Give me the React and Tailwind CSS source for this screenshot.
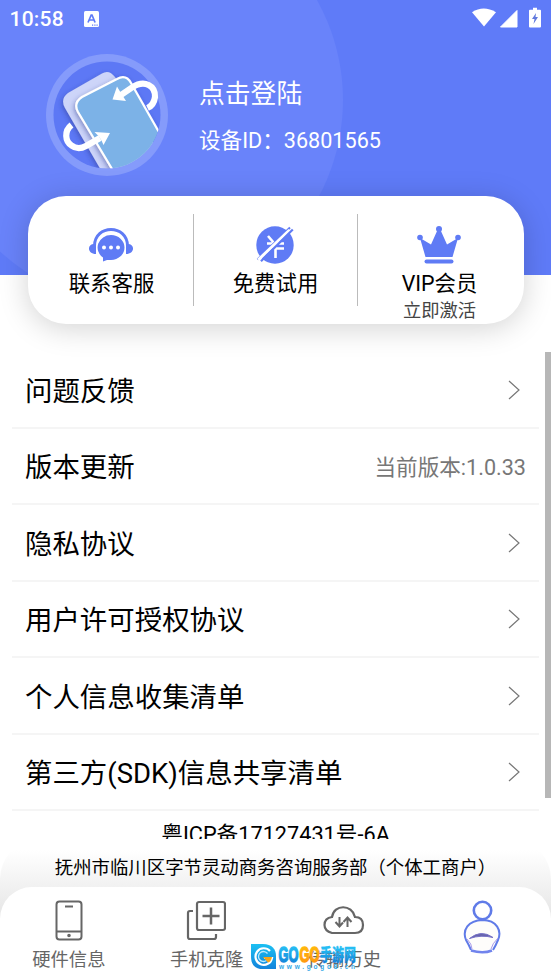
const menuItems = [
  { label: '问题反馈' },
  { label: '版本更新', note: '当前版本:1.0.33' },
  { label: '隐私协议' },
  { label: '用户许可授权协议' },
  { label: '个人信息收集清单' },
  { label: '第三方(SDK)信息共享清单' },
];

function StatusBar() {
  return (
    <div className="relative flex h-[38px] items-center text-white">
      <span className="ml-[9.5px] w-[54px] whitespace-nowrap text-[21px] font-medium leading-none tracking-[0.2px]">10:58</span>
      <svg className="ml-[20.5px] -mt-px" width="15" height="16" viewBox="0 0 15 16">
        <rect width="15" height="16" rx="1.5" fill="#fff" />
        <path d="M4 11.5 7.2 4h.8l3.1 7.5M5.2 9h4.6" fill="none" stroke="#5f7bf8" strokeWidth="1.7" />
        <path d="M8 14.2h1.2M10.3 14.2h1.2M12.5 14.2h1.2" stroke="#5f7bf8" strokeWidth="1.2" />
      </svg>
      <svg className="-mt-[3px] ml-auto mr-[8px]" width="72" height="22" viewBox="0 0 72 22">
        <path d="M1 5.3Q12.5-2.2 25 5.3L13 19.5Z" fill="#fff" />
        <path d="M46 3.5V20H29.5Z" fill="#fff" stroke="#fff" strokeLinejoin="round" />
        <path d="M62 .8h4v2h3q1 0 1 1V19.500q0 1-1 1H59q-1 0-1-1V3.800q0-1 1-1h3Z" fill="#fff" />
        <path d="M65 6 61 12h2.5l-1 5 4.5-7h-2.5Z" fill="#6179dd" />
      </svg>
    </div>
  );
}

function Avatar() {
  return (
    <svg width="122" height="122" viewBox="0 0 122 122">
      <defs>
        <clipPath id="disc">
          <circle cx="61" cy="61" r="53.5" />
        </clipPath>
        <filter id="soft" x="-30%" y="-30%" width="160%" height="160%">
          <feDropShadow dx="-1" dy="2" stdDeviation="2.5" floodColor="#26368f" floodOpacity=".5" />
        </filter>
      </defs>
      <circle cx="61" cy="61" r="61" fill="#859bfb" />
      <circle cx="61" cy="61" r="53.5" fill="#5d78f5" />
      <g clipPath="url(#disc)">
        <path d="M22 39 56 19.500Q63 15 69 23L120 110 70 142 19 54Q14 45 22 39Z" fill="#cdd5f9" filter="url(#soft)" />
        <path d="M36 43 71 25Q80 20 85 29L130 108 84 145 32 58Q27 49 36 43Z" fill="#7cb2e7" stroke="#fff" strokeWidth="2.200" filter="url(#soft)" />
      </g>
      <g fill="none" stroke="#fff" strokeWidth="6.200">
        <path d="M75 41 86 33.500C99 25 109.500 32 109 43Q108 51 101.500 54" />
        <path d="M25.500 71C18 77 19 87 25.500 91.500Q32 96.500 40 92L54 84" />
      </g>
      <path d="M66.500 45.500 71 32.500 74 37.500 77.500 43 80 47ZM64 79 48.500 78 52.500 82 55.500 86.500 57.500 91Z" fill="#fff" />
    </svg>
  );
}

function HeadsetIcon() {
  return (
    <svg className="mr-[2px]" width="44" height="34" viewBox="0 0 44 34">
      <path d="M5.500 18C5.500-4 38.500-4 38.500 18" fill="none" stroke="#5f7bf5" strokeWidth="3" />
      <path d="M7 16v10C-2 26-2 16 5 16ZM37 16v10C46 26 46 16 39 16Z" fill="#5f7bf5" />
      <path d="M22 7a13.500 12.500 0 1 1 0 25h-4l-4 1.500v-4A13.500 12.500 0 0 1 22 7Z" fill="#5f7bf5" />
      <g fill="#fff">
        <circle cx="15" cy="19.500" r="2" />
        <circle cx="22" cy="19.500" r="2" />
        <circle cx="29" cy="19.500" r="2" />
      </g>
    </svg>
  );
}

function FreeTrialIcon() {
  return (
    <svg className="mr-px" width="40" height="40" viewBox="0 0 40 40">
      <circle cx="20" cy="20" r="18.700" fill="#5f7bf5" />
      <path d="m13 11 6 7M12 18.500h17M18 23.500h11M20.500 18v15" stroke="#fff" strokeWidth="2.600" />
      <path d="M2.500 34.500 35 2.500" stroke="#5f7bf5" strokeWidth="2" />
      <path d="M3.300 34.800 34.500 5" stroke="#fff" strokeWidth="3" />
      <path d="M6 36.200 37.800 4.500" stroke="#5f7bf5" strokeWidth="2.200" />
    </svg>
  );
}

function CrownIcon() {
  return (
    <svg className="mr-[2px]" width="44" height="38" viewBox="0 0 44 38" fill="#5f7bf5">
      <circle cx="22" cy="3" r="3" />
      <circle cx="3" cy="11.500" r="2.800" />
      <circle cx="41" cy="11.500" r="2.800" />
      <path d="m3 12 11 6.500L20.500 4h3L30 18.500 41 12l-5.500 19h-27Z" />
      <rect x="7.500" y="33.500" width="29" height="4" rx="2" />
    </svg>
  );
}

function Action({ icon, label, sub }) {
  return (
    <div className="flex flex-1 flex-col items-center pt-[29px]">
      <div className="flex h-[40px] items-center">{icon}</div>
      <span className="mt-[5px] text-[21.4px] leading-[28px] text-black">{label}</span>
      {sub && <span className="text-[18.3px] leading-[25px] text-[#444]">{sub}</span>}
    </div>
  );
}

function MenuRow({ label, note }) {
  return (
    <div className="flex h-[76.5px] items-center border-b-2 border-[#f5f5f5] px-[13px] pt-[3px]">
      <span className="mt-[3px] text-[27.45px] leading-none text-black">{label}</span>
      {note ? (
        <span className="ml-auto mt-px text-[21.6px] leading-none text-[#777]">{note}</span>
      ) : (
        <svg className="-mt-[2px] ml-auto mr-[6px]" width="12" height="20" viewBox="0 0 12 20">
          <path d="m1 1 10 9-10 9" fill="none" stroke="#777" strokeWidth="1.2" />
        </svg>
      )}
    </div>
  );
}

function PhoneIcon() {
  return (
    <svg width="28" height="42" viewBox="0 0 28 42" fill="none" stroke="#666" strokeWidth="2">
      <rect x="1.500" y="1.500" width="25" height="38" rx="3" />
      <path d="M10 6.500h8M2 31.500h24" />
      <circle cx="14" cy="35.500" r=".8" fill="#666" />
    </svg>
  );
}

function CloneIcon() {
  return (
    <svg className="mr-px" width="40" height="42" viewBox="0 0 40 42" fill="none" stroke="#666" strokeWidth="2.2">
      <rect x="11" y="2" width="28" height="28" rx="2" />
      <path d="M16.500 16h17M25 7.500v17" strokeWidth="2.500" />
      <path d="M7 11H4q-2 0-2 2v24q0 2 2 2h24q2 0 2-2v-3" />
    </svg>
  );
}

function CloudIcon() {
  return (
    <svg width="42" height="42" viewBox="0 0 42 42" fill="none" stroke="#666" strokeWidth="2.200">
      <path d="M9 33Q1.500 31 1.500 25Q1.500 18 9 17C11 4 29 4 32 17Q40 17 40 25Q40 33 32 33Z" />
      <path d="M16.500 17v9.500M12.500 22l4 4.500 3.500-4M24.500 27v-9.500M20.500 22l4-4.500 4 4.500" strokeWidth="2" />
    </svg>
  );
}

function ProfileIcon() {
  return (
    <svg width="38" height="55" viewBox="0 0 38 55" fill="none" stroke="#607be8" strokeWidth="2.600">
      <circle cx="19.500" cy="10.500" r="8.700" />
      <path d="M8 50Q6 45 3 40C-1 30 5 20.500 19.500 20C34 20 39 31 35 40Q32.500 46 30 50" fill="#fefdfb" strokeWidth="2" />
      <path d="M6.500 38.500Q18 29 30 37.500Q18 34.500 6.500 38.500Z" fill="#6663ab" stroke="#7772c7" strokeWidth="1" />
      <path d="M4 39q5 5 5 10M35 38q-6 6-7 11" stroke="#a99bea" strokeWidth="1" />
      <path d="M8 50.500q12 3.500 21 0" stroke="#7184ed" strokeWidth="2.600" />
    </svg>
  );
}

function Tab({ icon, label }) {
  return (
    <div className="flex flex-1 flex-col items-center">
      <div className="flex h-[58px] items-start pt-[13px]">{icon}</div>
      <span className="text-[18.3px] leading-[30px] text-[#666]">{label}</span>
    </div>
  );
}

function SiteBadge() {
  return (
    <div className="absolute left-[251px] top-[57px] flex">
      <svg width="25" height="26" viewBox="0 0 25 26">
        <defs>
          <linearGradient id="badge" x2="0" y2="1">
            <stop stopColor="#1cc0f2" />
            <stop offset="1" stopColor="#1283dc" />
          </linearGradient>
        </defs>
        <path d="M0 0h12C21 0 25 5 25 12v13H12C3 25 0 20 0 12Z" fill="url(#badge)" />
        <path d="M19 7A8.300 8.300 0 1 0 21 14h-8" fill="none" stroke="#fff" strokeWidth="2.200" />
        <path d="M16.500 9.500a5 5 0 1 0-1 7" fill="none" stroke="#bfeaff" strokeWidth="1.300" />
        <path d="M12 13h9q-1 5-4 5.500Z" fill="#f9a51a" />
      </svg>
      <svg className="ml-[1px]" width="82" height="28" viewBox="0 0 82 28" fontFamily="Liberation Sans, Noto Sans CJK SC, sans-serif" fontWeight="900">
        <defs>
          <linearGradient id="blueInk" x2="0" y2="1">
            <stop offset=".2" stopColor="#25bdf3" />
            <stop offset=".9" stopColor="#1180d8" />
          </linearGradient>
          <linearGradient id="goldInk" x2="0" y2="1">
            <stop offset=".2" stopColor="#ffb80c" />
            <stop offset=".9" stopColor="#ff9410" />
          </linearGradient>
        </defs>
        <g strokeWidth="1.500">
          <text x="1.500" y="18" fontSize="22" textLength="20" lengthAdjust="spacingAndGlyphs" fill="url(#blueInk)" stroke="url(#blueInk)">GO</text>
          <text x="22.500" y="18" fontSize="22" textLength="20" lengthAdjust="spacingAndGlyphs" fill="url(#goldInk)" stroke="url(#goldInk)">GO</text>
        </g>
        <text x="43" y="17" fontSize="17" textLength="36" lengthAdjust="spacingAndGlyphs" fill="url(#blueInk)" stroke="url(#blueInk)" strokeWidth=".3">手游网</text>
        <text x="2" y="25" fontSize="6.500" textLength="76" fill="#35a8e6">www.gogo8.cn</text>
      </svg>
    </div>
  );
}

export default function App() {
  return (
    <div className="h-[979px] w-[551px] overflow-hidden bg-white font-[Roboto,'Noto_Sans_CJK_SC',sans-serif]">
      <header className="relative h-[275px] overflow-hidden bg-[#5f7bf8]">
        <div className="absolute -left-[67px] -top-[105px] h-[410px] w-[410px] rounded-full bg-[#6983fa]" />
        <StatusBar />
        <div className="relative flex pl-[46px] pt-[16px] text-white">
          <Avatar />
          <div className="ml-[31px] pt-[24px]">
            <div className="text-[25.8px] leading-[32px]">点击登陆</div>
            <div className="mt-[16px] text-[21.6px] leading-[30px]">设备ID：36801565</div>
          </div>
        </div>
      </header>

      <section className="relative ml-[27.5px] -mt-[79px] flex h-[128px] w-[496px] rounded-[38px] bg-white px-[2.5px] shadow-[0_4px_30px_rgba(0,0,0,0.18)]">
        <Action icon={<HeadsetIcon />} label="联系客服" />
        <div className="mt-[18px] h-[92px] w-px bg-[#bbb]" />
        <Action icon={<FreeTrialIcon />} label="免费试用" />
        <div className="mt-[18px] h-[92px] w-px bg-[#bbb]" />
        <Action icon={<CrownIcon />} label="VIP会员" sub="立即激活" />
      </section>

      <main className="mt-[28px] flex h-[487px] items-start overflow-hidden">
        <div className="ml-[12px] w-[527px]">
          {menuItems.map((item) => (
            <MenuRow key={item.label} {...item} />
          ))}
          <div className="mt-[8px] text-center text-[21.7px] leading-[32px]">粤ICP备17127431号-6A</div>
        </div>
        <div className="ml-auto h-[446px] w-[6px] bg-[#b7b7b7]" />
      </main>

      <footer className="h-[140px] rounded-t-[40px] bg-gradient-to-b from-white from-8% to-[#e6e6e6] to-55%">
        <div className="h-[48px] pt-[14px] text-center text-[18.4px] leading-[30px]">抚州市临川区字节灵动商务咨询服务部（个体工商户）</div>
        <nav className="relative flex h-[92px] rounded-t-[32px] bg-white">
          <Tab icon={<PhoneIcon />} label="硬件信息" />
          <Tab icon={<CloneIcon />} label="手机克隆" />
          <Tab icon={<CloudIcon />} label="传输历史" />
          <Tab icon={<ProfileIcon />} />
          <SiteBadge />
        </nav>
      </footer>
    </div>
  );
}
